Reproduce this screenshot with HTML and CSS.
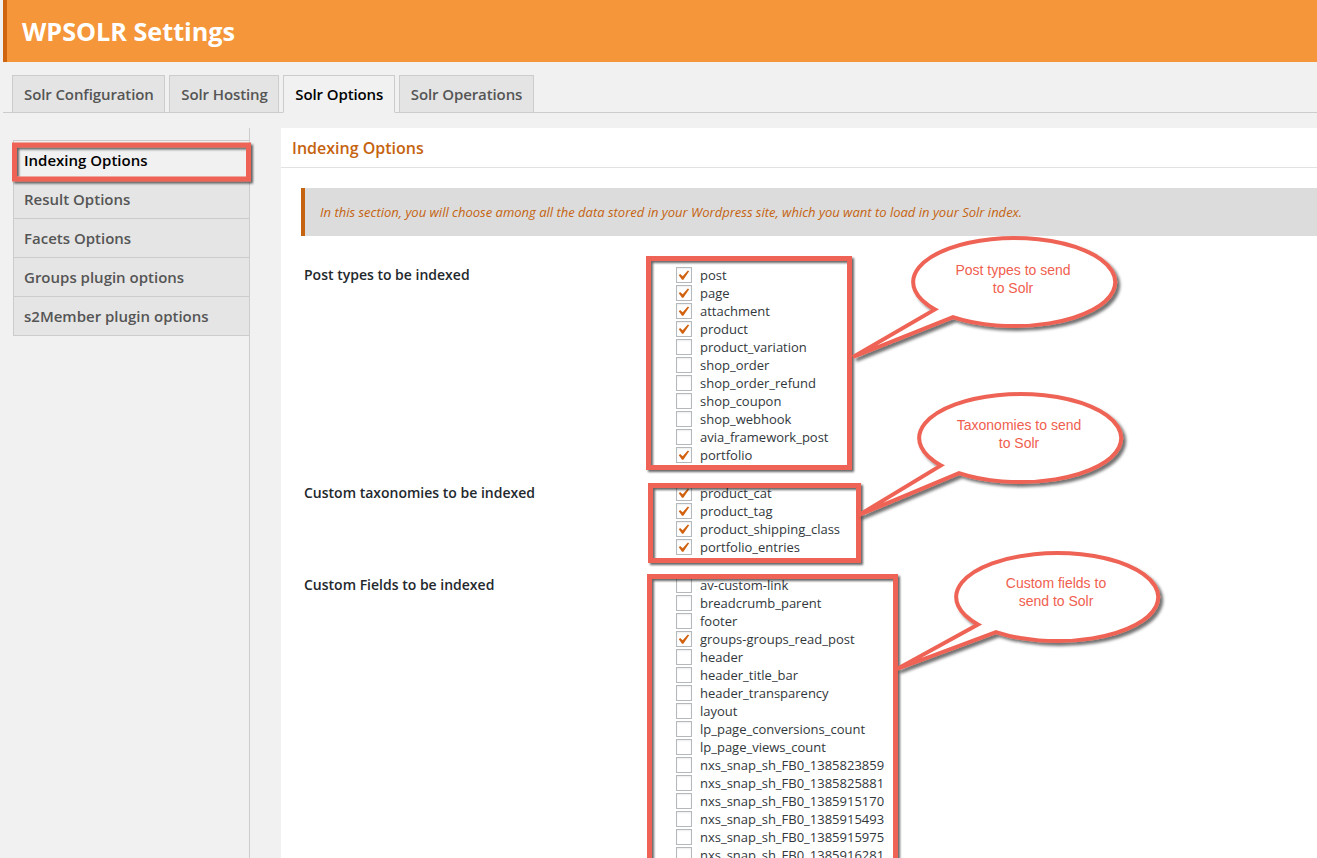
FILE: index.html
```html
<!DOCTYPE html>
<html lang="en">
<head>
<meta charset="utf-8">
<title>WPSOLR Settings</title>
<link rel="stylesheet" href="styles.css">
</head>
<body>
<header class="hdr"><h1 class="hdr-title">WPSOLR Settings</h1></header>
<nav class="tabs">
  <a class="tab">Solr Configuration</a>
  <a class="tab">Solr Hosting</a>
  <a class="tab tab-active">Solr Options</a>
  <a class="tab">Solr Operations</a>
</nav>
<div class="main">
  <aside class="side">
    <ul class="side-list">
      <li class="side-item side-active">Indexing Options</li>
      <li class="side-item">Result Options</li>
      <li class="side-item">Facets Options</li>
      <li class="side-item">Groups plugin options</li>
      <li class="side-item">s2Member plugin options</li>
    </ul>
  </aside>
  <section class="panel">
    <h2 class="panel-title">Indexing Options</h2>
    <div class="notice">In this section, you will choose among all the data stored in your Wordpress site, which you want to load in your Solr index.</div>
    <div class="form">
      <div class="row">
        <div class="label">Post types to be indexed</div>
        <ul class="checks">
          <li class="check"><span class="cb"><svg viewBox="4 2.5 14 14"><path d="M14.83 4.89l1.34.94-5.81 8.38H9.02L5.78 9.67l1.34-1.25 2.57 2.4z"/></svg></span>post</li>
          <li class="check"><span class="cb"><svg viewBox="4 2.5 14 14"><path d="M14.83 4.89l1.34.94-5.81 8.38H9.02L5.78 9.67l1.34-1.25 2.57 2.4z"/></svg></span>page</li>
          <li class="check"><span class="cb"><svg viewBox="4 2.5 14 14"><path d="M14.83 4.89l1.34.94-5.81 8.38H9.02L5.78 9.67l1.34-1.25 2.57 2.4z"/></svg></span>attachment</li>
          <li class="check"><span class="cb"><svg viewBox="4 2.5 14 14"><path d="M14.83 4.89l1.34.94-5.81 8.38H9.02L5.78 9.67l1.34-1.25 2.57 2.4z"/></svg></span>product</li>
          <li class="check"><span class="cb"></span>product_variation</li>
          <li class="check"><span class="cb"></span>shop_order</li>
          <li class="check"><span class="cb"></span>shop_order_refund</li>
          <li class="check"><span class="cb"></span>shop_coupon</li>
          <li class="check"><span class="cb"></span>shop_webhook</li>
          <li class="check"><span class="cb"></span>avia_framework_post</li>
          <li class="check"><span class="cb"><svg viewBox="4 2.5 14 14"><path d="M14.83 4.89l1.34.94-5.81 8.38H9.02L5.78 9.67l1.34-1.25 2.57 2.4z"/></svg></span>portfolio</li>
        </ul>
      </div>
      <div class="row">
        <div class="label">Custom taxonomies to be indexed</div>
        <ul class="checks">
          <li class="check"><span class="cb"><svg viewBox="4 2.5 14 14"><path d="M14.83 4.89l1.34.94-5.81 8.38H9.02L5.78 9.67l1.34-1.25 2.57 2.4z"/></svg></span>product_cat</li>
          <li class="check"><span class="cb"><svg viewBox="4 2.5 14 14"><path d="M14.83 4.89l1.34.94-5.81 8.38H9.02L5.78 9.67l1.34-1.25 2.57 2.4z"/></svg></span>product_tag</li>
          <li class="check"><span class="cb"><svg viewBox="4 2.5 14 14"><path d="M14.83 4.89l1.34.94-5.81 8.38H9.02L5.78 9.67l1.34-1.25 2.57 2.4z"/></svg></span>product_shipping_class</li>
          <li class="check"><span class="cb"><svg viewBox="4 2.5 14 14"><path d="M14.83 4.89l1.34.94-5.81 8.38H9.02L5.78 9.67l1.34-1.25 2.57 2.4z"/></svg></span>portfolio_entries</li>
        </ul>
      </div>
      <div class="row">
        <div class="label">Custom Fields to be indexed</div>
        <ul class="checks">
          <li class="check"><span class="cb"></span>av-custom-link</li>
          <li class="check"><span class="cb"></span>breadcrumb_parent</li>
          <li class="check"><span class="cb"></span>footer</li>
          <li class="check"><span class="cb"><svg viewBox="4 2.5 14 14"><path d="M14.83 4.89l1.34.94-5.81 8.38H9.02L5.78 9.67l1.34-1.25 2.57 2.4z"/></svg></span>groups-groups_read_post</li>
          <li class="check"><span class="cb"></span>header</li>
          <li class="check"><span class="cb"></span>header_title_bar</li>
          <li class="check"><span class="cb"></span>header_transparency</li>
          <li class="check"><span class="cb"></span>layout</li>
          <li class="check"><span class="cb"></span>lp_page_conversions_count</li>
          <li class="check"><span class="cb"></span>lp_page_views_count</li>
          <li class="check"><span class="cb"></span>nxs_snap_sh_FB0_1385823859</li>
          <li class="check"><span class="cb"></span>nxs_snap_sh_FB0_1385825881</li>
          <li class="check"><span class="cb"></span>nxs_snap_sh_FB0_1385915170</li>
          <li class="check"><span class="cb"></span>nxs_snap_sh_FB0_1385915493</li>
          <li class="check"><span class="cb"></span>nxs_snap_sh_FB0_1385915975</li>
          <li class="check"><span class="cb"></span>nxs_snap_sh_FB0_1385916281</li>
        </ul>
      </div>
    </div>
  </section>
</div>

<svg class="annot" width="1317" height="858" viewBox="0 0 1317 858">
  <defs>
    <filter id="sh" x="-20%" y="-20%" width="140%" height="140%">
      <feDropShadow dx="2" dy="2" stdDeviation="1.2" flood-color="#000" flood-opacity="0.6"/>
    </filter>
    <filter id="shb" x="-20%" y="-20%" width="140%" height="140%">
      <feDropShadow dx="3" dy="3" stdDeviation="1.6" flood-color="#000" flood-opacity="0.55"/>
    </filter>
  </defs>
  <rect class="a-box" x="14.5" y="145" width="234" height="34" filter="url(#sh)"/>
  <rect class="a-box" x="648.5" y="258.5" width="201" height="209" filter="url(#sh)"/>
  <rect class="a-box" x="650.5" y="485.5" width="208" height="75" filter="url(#sh)"/>
  <rect class="a-box" x="649.5" y="576.5" width="246" height="320" filter="url(#sh)"/>

  <path class="a-bub" filter="url(#shb)" d="M853 357 L935 309.4 A101 44 0 1 1 953 317.1 Z"/>
  <text class="a-txt" x="1013" y="275">Post types to send</text>
  <text class="a-txt" x="1013" y="293">to Solr</text>

  <path class="a-bub" filter="url(#shb)" d="M859 515 L941 465.4 A101 44 0 1 1 959 473.1 Z"/>
  <text class="a-txt" x="1019" y="430">Taxonomies to send</text>
  <text class="a-txt" x="1019" y="448">to Solr</text>

  <path class="a-bub" filter="url(#shb)" d="M897 669 L978 624.4 A101 44 0 1 1 996 632.1 Z"/>
  <text class="a-txt" x="1056" y="588">Custom fields to</text>
  <text class="a-txt" x="1056" y="606">send to Solr</text>
</svg>
</body>
</html>
```

FILE: styles.css
```css
html, body {
  margin: 0;
  padding: 0;
  overflow: hidden;
}
body {
  position: relative;
  width: 1317px;
  height: 858px;
  background: #f1f1f1;
  font-family: "Open Sans", "DejaVu Sans", sans-serif;
  color: #444;
}

/* header */
.hdr {
  margin-left: 3px;
  height: 62px;
  border-left: 4px solid #d0650f;
  background: #f49639;
}
.hdr-title {
  margin: 0;
  padding-left: 15px;
  line-height: 62px;
  font-size: 25.2px;
  font-weight: 700;
  color: #fff;
}

/* tabs */
.tabs {
  display: flex;
  gap: 4px;
  margin: 13px 0 0 3px;
  padding-left: 9px;
  border-bottom: 1px solid #ccc;
}
.tab {
  display: block;
  padding: 0 10.5px 0 11px;
  line-height: 36px;
  border: 1px solid #ccc;
  border-bottom: 0;
  background: #e4e4e4;
  color: #555;
  font-size: 15px;
  font-weight: 600;
  letter-spacing: -0.1px;
}
.tab-active {
  background: #f1f1f1;
  color: #000;
  margin-bottom: -1px;
  border-bottom: 1px solid #f1f1f1;
}

/* layout */
.main {
  display: flex;
  margin-top: 15px;
  height: 760px;
}
.side {
  box-sizing: border-box;
  width: 250px;
  flex: none;
  border-right: 1px solid #ccc;
  padding: 12px 0 0 13px;
}
.side-list {
  list-style: none;
  margin: 0;
  padding: 0;
}
.side-item {
  height: 38px;
  line-height: 38px;
  padding-left: 10px;
  border: 1px solid #ccc;
  border-right: 0;
  border-bottom: 0;
  background: #e5e5e5;
  color: #555;
  font-size: 15px;
  font-weight: 600;
}
.side-item:last-child {
  border-bottom: 1px solid #ccc;
}
.side-active {
  background: #f1f1f1;
  color: #000;
}

.panel {
  flex: 1;
  margin-left: 31px;
  background: #fff;
}
.panel-title {
  margin: 0;
  height: 39px;
  line-height: 40px;
  padding-left: 11px;
  border-bottom: 1px solid #e2e2e2;
  font-size: 16px;
  font-weight: 600;
  color: #c5630f;
}
.notice {
  margin: 20px 0 0 20px;
  height: 48px;
  line-height: 48px;
  padding-left: 15px;
  border-left: 4px solid #c5630f;
  background: #dcdcdc;
  color: #c5630f;
  font-size: 13px;
  font-style: italic;
}

/* form */
.form {
  padding: 30px 0 0 23px;
}
.row {
  display: flex;
  margin-bottom: 20px;
}
.label {
  width: 372px;
  flex: none;
  line-height: 18px;
  font-size: 14px;
  font-weight: 600;
  color: #23282d;
}
.checks {
  list-style: none;
  margin: 0;
  padding: 0;
}
.check {
  display: flex;
  align-items: center;
  height: 18px;
  font-size: 13px;
  color: #32373c;
  white-space: nowrap;
}
.cb {
  box-sizing: border-box;
  width: 16px;
  height: 16px;
  margin-right: 8px;
  border: 1px solid #b4b9be;
  background: #fff;
  box-shadow: inset 0 1px 2px rgba(0, 0, 0, 0.07);
  display: flex;
  align-items: center;
  justify-content: center;
}
.cb svg {
  width: 14px;
  height: 14px;
  fill: #d1620f;
}

/* annotations overlay */
.annot {
  position: absolute;
  left: 0;
  top: 0;
  pointer-events: none;
}
.a-box {
  fill: none;
  stroke: #ee6454;
  stroke-width: 5;
}
.a-bub {
  fill: #fff;
  stroke: #ee6454;
  stroke-width: 4;
  stroke-linejoin: miter;
}
.a-txt {
  font-family: "Liberation Sans", Arial, sans-serif;
  font-size: 14px;
  fill: #f0604f;
  text-anchor: middle;
}
```
